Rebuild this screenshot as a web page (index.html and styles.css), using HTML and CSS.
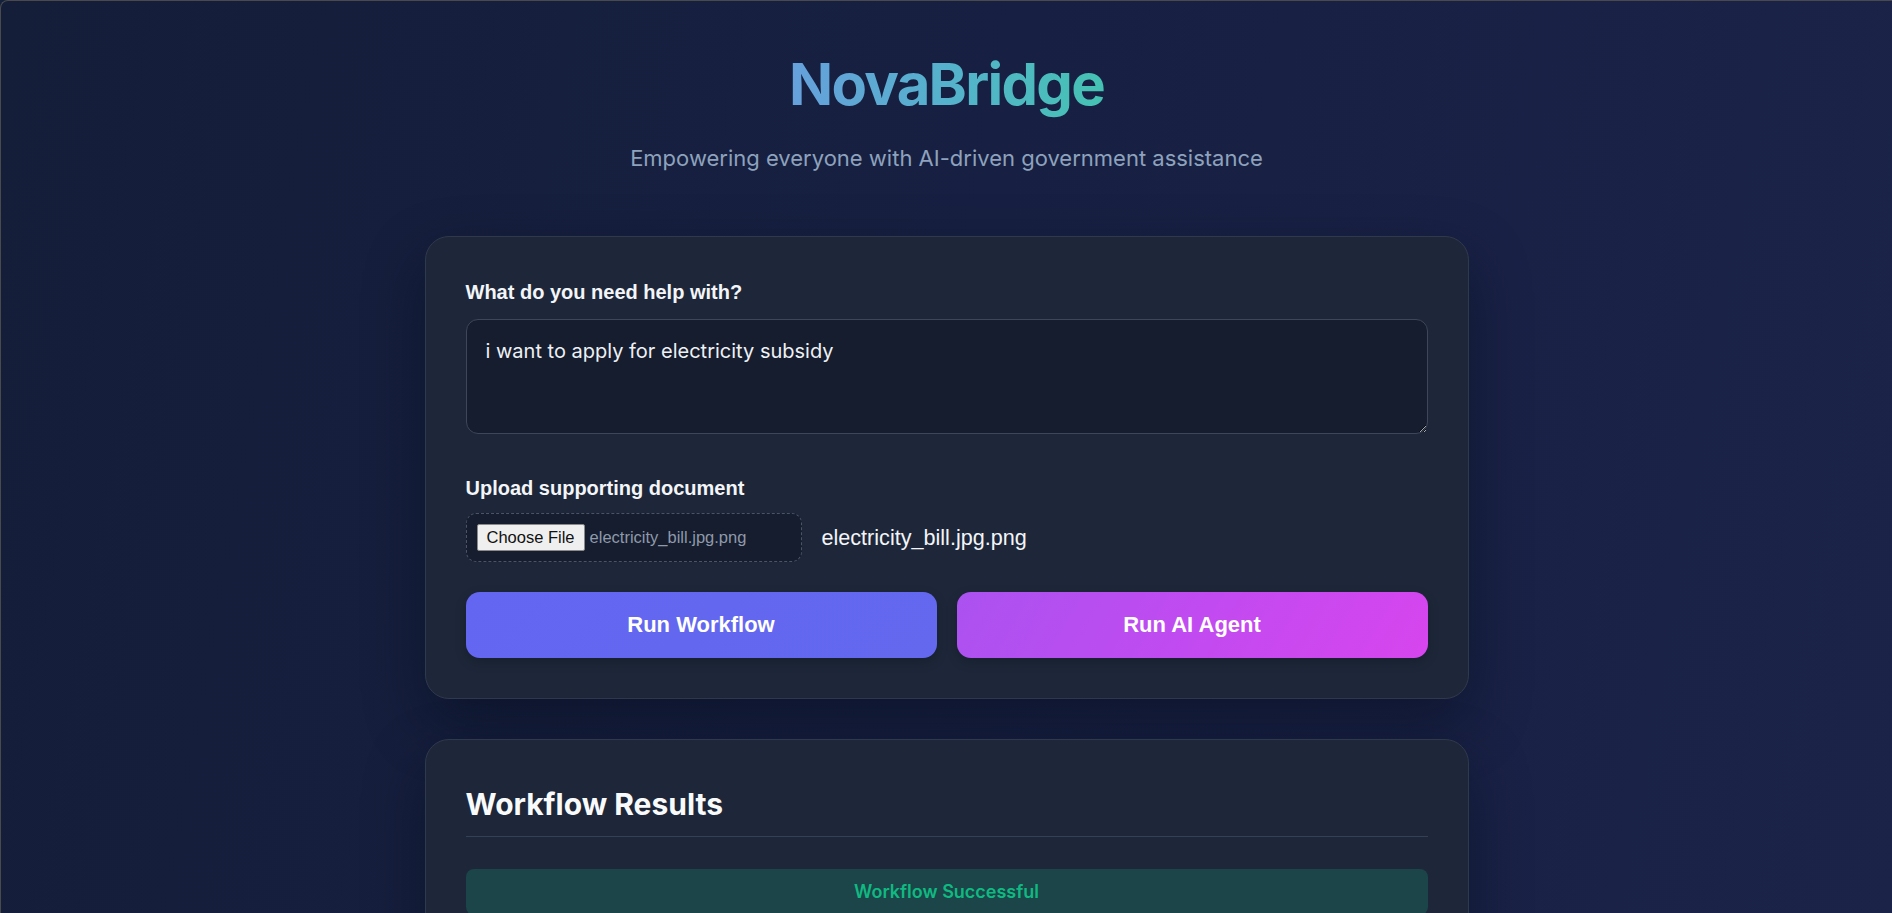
FILE: index.html
```html
<!DOCTYPE html>
<html lang="en">
<head>
<meta charset="utf-8">
<title>NovaBridge</title>
<link rel="stylesheet" href="styles.css">
</head>
<body>
<div class="frame">
  <main class="page">
    <header class="header">
      <h1 class="brand">NovaBridge</h1>
      <p class="tagline">Empowering everyone with AI-driven government assistance</p>
    </header>

    <section class="card form-card">
      <label class="field-label" for="need">What do you need help with?</label>
      <textarea id="need" class="query" spellcheck="false">i want to apply for electricity subsidy</textarea>

      <div class="upload-group">
        <h3 class="upload-label">Upload supporting document</h3>
        <div class="upload-row">
          <label class="file-input">
            <span class="file-btn">Choose File</span>
            <span class="file-chosen">electricity_bill.jpg.png</span>
          </label>
          <span class="file-name">electricity_bill.jpg.png</span>
        </div>
      </div>

      <div class="actions">
        <button class="btn btn-workflow" type="button">Run Workflow</button>
        <button class="btn btn-agent" type="button">Run AI Agent</button>
      </div>
    </section>

    <section class="card results-card">
      <h2 class="results-title">Workflow Results</h2>
      <div class="status-success">Workflow Successful</div>
    </section>
  </main>
</div>
</body>
</html>
```

FILE: styles.css
```css
html, body {
  margin: 0;
  padding: 0;
  height: 100%;
}

body {
  background: #15203b;
  font-family: "Inter", "Noto Sans", sans-serif;
  color: #f1f5f9;
  overflow: hidden;
}

.frame {
  box-sizing: border-box;
  min-height: 100vh;
  border-top: 1px solid #4a4a4c;
  border-left: 1px solid #4a4a4c;
  border-top-left-radius: 8px;
  background: linear-gradient(100deg, #141e39 0%, #172042 50%, #1b2349 100%);
}

.page {
  padding-top: 48px;
  padding-bottom: 60px;
}

.header {
  text-align: center;
}

.brand {
  margin: 0;
  font-size: 58px;
  font-weight: 700;
  letter-spacing: -0.03em;
  line-height: 1.21;
  background: linear-gradient(90deg, #66a0dc 0%, #55b2cc 50%, #45c2b3 100%);
  -webkit-background-clip: text;
  background-clip: text;
  color: transparent;
  display: inline-block;
}

.tagline {
  margin: 26px 0 0;
  font-size: 22px;
  line-height: 26px;
  color: #8ea2bd;
}

.card {
  box-sizing: border-box;
  width: 1044px;
  margin: 65px auto 0;
  padding: 40px;
  background: #1d2739;
  border: 1px solid #30394b;
  border-radius: 24px;
  box-shadow: 0 24px 60px rgba(5, 10, 25, 0.45);
}

.field-label {
  display: block;
  font-family: "Liberation Sans", Arial, sans-serif;
  font-size: 20px;
  font-weight: 700;
  line-height: 30px;
  color: #f3f5f8;
  margin-bottom: 12px;
}

.query {
  display: block;
  box-sizing: border-box;
  width: 100%;
  height: 115px;
  padding: 18px 19px;
  background: #151d2e;
  border: 1px solid #3d4759;
  border-radius: 12px;
  color: #eef1f5;
  font-family: "Inter", "Noto Sans", sans-serif;
  font-size: 20px;
  line-height: 1.3;
  outline: none;
  resize: vertical;
}

.upload-group {
  margin-top: 43px;
}

.upload-label {
  margin: 0 0 13px;
  font-family: "Liberation Sans", Arial, sans-serif;
  font-size: 20px;
  font-weight: 700;
  line-height: 23px;
  color: #f3f5f8;
}

.upload-row {
  display: flex;
  align-items: center;
  gap: 20px;
}

.file-input {
  box-sizing: border-box;
  display: flex;
  align-items: center;
  width: 336px;
  height: 49px;
  padding: 0 10px;
  background: #151d2e;
  border: 1px dashed #4a5466;
  border-radius: 10px;
  font-family: "Liberation Sans", Arial, sans-serif;
  font-size: 16.5px;
}

.file-btn {
  box-sizing: border-box;
  height: 27px;
  padding: 0 9px;
  display: flex;
  align-items: center;
  background: #efefef;
  color: #111;
  border: 1px solid #8a8a8a;
  border-radius: 2px;
}

.file-chosen {
  margin-left: 5px;
  color: #8f99aa;
}

.file-name {
  font-family: "Liberation Sans", Arial, sans-serif;
  font-size: 21.6px;
  color: #f3f5f8;
}

.actions {
  display: grid;
  grid-template-columns: 1fr 1fr;
  gap: 20px;
  margin-top: 30px;
}

.btn {
  height: 66px;
  border: none;
  border-radius: 14px;
  color: #ffffff;
  font-family: "Liberation Sans", Arial, sans-serif;
  font-size: 22px;
  font-weight: 700;
  cursor: pointer;
  box-shadow: 0 4px 12px rgba(0, 0, 0, 0.2);
}

.btn-workflow {
  background: linear-gradient(135deg, #6366f1 0%, #6368ef 100%);
}

.btn-agent {
  background: linear-gradient(120deg, #ab52f0 0%, #c34af0 55%, #d745ee 100%);
}

.results-card {
  margin-top: 40px;
}

.results-title {
  margin: 6px 0 0;
  padding-bottom: 14px;
  border-bottom: 1px solid #344055;
  font-size: 30px;
  font-weight: 700;
  line-height: 1.21;
  color: #f8fafc;
}

.status-success {
  margin-top: 32px;
  padding: 12px 16px;
  background: #1b4548;
  border-radius: 8px;
  text-align: center;
  color: #10b981;
  font-size: 18px;
  font-weight: 600;
  line-height: 1.2;
}
```
